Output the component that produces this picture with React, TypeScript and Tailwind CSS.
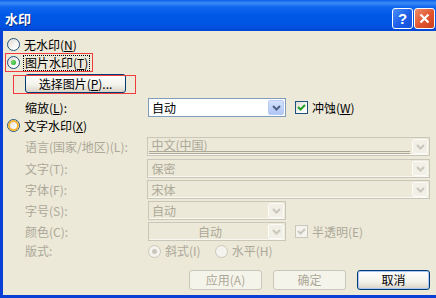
import React from 'react';

// XP-style "水印" (watermark) dialog

const FONT = "font-['Noto_Sans_CJK_SC','Liberation_Sans',sans-serif]";

function Radio({ checked, disabled, hover }: { checked?: boolean; disabled?: boolean; hover?: boolean }) {
  const ring = disabled
    ? 'border-[#cac8bb] bg-[#f4f3ee]'
    : 'border-[#1c5180] bg-[linear-gradient(135deg,#dcd9cf,#ffffff_75%)]';
  return (
    <span className={`relative shrink-0 w-[13px] h-[13px] rounded-full border ${ring} flex items-center justify-center`}>
      {hover && <span className="absolute inset-0 rounded-full border-2 border-[#f8b636]" />}
      {checked && (
        <span
          className={`w-[5px] h-[5px] rounded-full ${
            disabled ? 'bg-[#cac8bb]' : 'bg-[radial-gradient(circle_at_40%_40%,#6fe06f,#21a121)]'
          }`}
        />
      )}
    </span>
  );
}

function Check({ disabled }: { disabled?: boolean }) {
  return (
    <span
      className={`shrink-0 w-[13px] h-[13px] border flex items-center justify-center ${
        disabled ? 'border-[#cac8bb] bg-[#f4f3ee]' : 'border-[#1c5180] bg-[linear-gradient(135deg,#dcd9cf,#ffffff_75%)]'
      }`}
    >
      <svg width="9" height="9" viewBox="0 0 9 9">
        <path d="M1 4 L3.5 6.5 L8 2" fill="none" stroke={disabled ? '#cac8bb' : '#21a121'} strokeWidth="2" />
      </svg>
    </span>
  );
}

function Chevron({ color }: { color: string }) {
  return (
    <svg width="9" height="6" viewBox="0 0 9 6">
      <path d="M1 1 L4.5 4.5 L8 1" fill="none" stroke={color} strokeWidth="2" />
    </svg>
  );
}

function Select({ value, width, disabled, center, lines }: { value: string; width: string; disabled?: boolean; center?: boolean; lines?: boolean }) {
  if (!disabled) {
    return (
      <div className={`${width} h-[19px] border border-[#7f9db9] bg-white flex items-center justify-between pl-[3px] pr-[1px]`}>
        <span className="leading-none">{value}</span>
        <span className="w-[16px] h-[15px] rounded-[2px] border border-[#b9ccf5] bg-[linear-gradient(to_bottom,#d4e0fd,#b0c6f6)] flex items-center justify-center">
          <Chevron color="#4d6185" />
        </span>
      </div>
    );
  }
  return (
    <div className={`relative ${width} h-[19px] border border-[#c9c7ba] bg-[#ece9d8] flex items-center justify-between pl-[3px] pr-[1px] shadow-[inset_0_-1px_0_#f8f7f2]`}>
      {center ? (
        <span className="flex-1 flex justify-center">
          <span className="leading-none text-[#aca899] bg-[#ece9d8] px-[1px]">{value}</span>
        </span>
      ) : (
        <span className={`leading-none text-[#aca899] ${lines ? 'self-start pt-[1px]' : ''}`}>{value}</span>
      )}
      {lines && (
        <span className="absolute left-[1px] right-[19px] bottom-[1px] h-[3px] border-t border-b border-[#aca899]" />
      )}
      <span className="w-[16px] h-[15px] rounded-[2px] border border-[#fbfbf8] bg-[#f1efe6] flex items-center justify-center">
        <Chevron color="#cac8bb" />
      </span>
    </div>
  );
}

function Btn({ label, disabled, primary }: { label: React.ReactNode; disabled?: boolean; primary?: boolean }) {
  const cls = disabled
    ? 'border-[#c9c7ba] bg-[#f5f4ea] text-[#aca899]'
    : primary
    ? 'border-[#003c74] bg-[linear-gradient(to_bottom,#ffffff,#f2f1ea_60%,#d8d3c6)] shadow-[inset_0_0_0_1px_#a9c6f5] text-black'
    : 'border-[#003c74] bg-[linear-gradient(to_bottom,#ffffff,#f2f1ea_60%,#d8d3c6)] text-black';
  return (
    <div className={`w-[73px] h-[20px] rounded-[3px] border ${cls} flex items-center justify-center leading-none`}>
      {label}
    </div>
  );
}

const Ul = ({ c }: { c: string }) => <span className="underline underline-offset-1">{c}</span>;

export default function App() {
  const dim = 'text-[#aca899]';
  return (
    <div className={`w-[436px] h-[298px] overflow-hidden bg-[#ece9d8] text-[12px] text-black ${FONT}`}>
      {/* title bar */}
      <div className="h-[31px] bg-[linear-gradient(to_bottom,#0a5fe9_0%,#3d8cf6_10%,#1166ee_22%,#0058e6_50%,#0054e2_80%,#0046d4_100%)] flex items-center pt-[6px] pl-[5px] pr-[1px]">
        <span className="text-white font-bold text-[13px] leading-none [text-shadow:1px_1px_0_#0c2a86]">水印</span>
        <div className="ml-auto flex gap-[1px]">
          <div className="w-[21px] h-[21px] rounded-[3px] border border-white bg-[linear-gradient(135deg,#4c8ef8,#1d5ee8_55%,#1450d8)] flex items-center justify-center text-white font-bold text-[15px] leading-none font-['Liberation_Sans',sans-serif]">
            ?
          </div>
          <div className="w-[21px] h-[21px] rounded-[3px] border border-white bg-[linear-gradient(135deg,#ef8a68,#e0552f_55%,#c9401c)] flex items-center justify-center">
            <svg width="11" height="11" viewBox="0 0 11 11">
              <path d="M1.5 1.5 L9.5 9.5 M9.5 1.5 L1.5 9.5" stroke="#fff" strokeWidth="2.2" />
            </svg>
          </div>
        </div>
      </div>

      {/* body */}
      <div className="relative h-[267px] border-l-[3px] border-b-[3px] border-[#0a3fd6] flex flex-col pl-[4px] pr-[6px]">
        <div className="mt-[7px] h-[13px] flex items-center gap-[4px]">
          <Radio />
          <span className="leading-none">无水印(<Ul c="N" />)</span>
        </div>

        <div className="relative mt-[4px] h-[15px] flex items-center gap-[4px]">
          <Radio checked />
          <span className="leading-none outline-1 outline-dotted outline-black px-[1px] py-[1px]">
            图片水印(<Ul c="T" />)
          </span>
          <span className="absolute -left-[2px] top-[-2px] w-[88px] h-[19px] border border-[#f03c3c]" />
        </div>

        <div className="relative mt-[4px] h-[19px] flex">
          <div className="ml-[18px] w-[101px] h-[19px] rounded-[3px] border border-[#003c74] bg-[linear-gradient(to_bottom,#ffffff,#f2f1ea_60%,#d8d3c6)] flex items-center justify-center leading-none">
            选择图片(<Ul c="P" />)...
          </div>
          <span className="absolute left-[6px] top-[1px] w-[123px] h-[19px] border border-[#f03c3c]" />
        </div>

        <div className="mt-[5px] h-[19px] flex items-center">
          <span className="ml-[18px] w-[123px] leading-none">
            缩放(<Ul c="L" />):
          </span>
          <Select value="自动" width="w-[138px]" />
          <span className="ml-[9px]">
            <Check />
          </span>
          <span className="ml-[4px] leading-none">
            冲蚀(<Ul c="W" />)
          </span>
        </div>

        <div className="mt-[2px] h-[13px] flex items-center gap-[4px]">
          <Radio hover />
          <span className="leading-none">文字水印(<Ul c="X" />)</span>
        </div>

        <div className="mt-[5px] h-[19px] flex items-center">
          <span className={`ml-[18px] w-[123px] leading-none ${dim}`}>语言(国家/地区)(L):</span>
          <Select value="中文(中国)" width="w-[284px]" disabled lines />
        </div>
        <div className="mt-[3px] h-[19px] flex items-center">
          <span className={`ml-[18px] w-[123px] leading-none ${dim}`}>文字(T):</span>
          <Select value="保密" width="w-[284px]" disabled />
        </div>
        <div className="mt-[2px] h-[19px] flex items-center">
          <span className={`ml-[18px] w-[123px] leading-none ${dim}`}>字体(F):</span>
          <Select value="宋体" width="w-[284px]" disabled />
        </div>
        <div className="mt-[2px] h-[19px] flex items-center">
          <span className={`ml-[18px] w-[123px] leading-none ${dim}`}>字号(S):</span>
          <Select value="自动" width="w-[138px]" disabled />
        </div>
        <div className="mt-[2px] h-[19px] flex items-center">
          <span className={`ml-[18px] w-[123px] leading-none ${dim}`}>颜色(C):</span>
          <Select value="自动" width="w-[138px]" disabled center />
          <span className="ml-[9px]">
            <Check disabled />
          </span>
          <span className={`ml-[4px] leading-none ${dim}`}>半透明(E)</span>
        </div>

        <div className="mt-[3px] h-[14px] flex items-center">
          <span className={`ml-[18px] w-[123px] leading-none ${dim}`}>版式:</span>
          <Radio checked disabled />
          <span className={`ml-[4px] leading-none ${dim}`}>斜式(I)</span>
          <span className="ml-[14px]">
            <Radio disabled />
          </span>
          <span className={`ml-[4px] leading-none ${dim}`}>水平(H)</span>
        </div>

        <div className="mt-[12px] flex justify-end gap-[11px]">
          <Btn label="应用(A)" disabled />
          <Btn label="确定" disabled />
          <Btn label="取消" primary />
        </div>
      </div>
    </div>
  );
}
